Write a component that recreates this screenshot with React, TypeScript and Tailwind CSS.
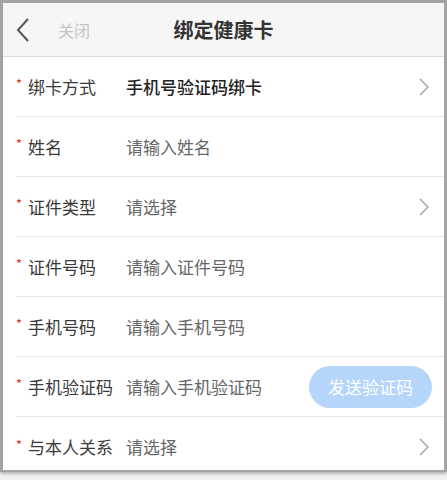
const font = { fontFamily: '"Noto Sans CJK SC", "Noto Sans", sans-serif' };

function Chevron() {
  return (
    <svg width="12" height="20" viewBox="0 0 12 20" className="mr-[14px] shrink-0">
      <path d="M2 2 L10 10 L2 18" fill="none" stroke="#a8a8a8" strokeWidth="1.6" />
    </svg>
  );
}

type RowProps = {
  label: string;
  value: string;
  strong?: boolean;
  arrow?: boolean;
  button?: boolean;
};

function Row({ label, value, strong, arrow, button }: RowProps) {
  return (
    <div className="ml-[13px] flex h-[60px] shrink-0 items-center border-b border-[#e6e6e6] last:border-b-0">
      <span className="mb-[6px] w-[12px] text-[13px] leading-none text-[#f0302a]">*</span>
      <span className="w-[98px] text-[17px] text-[#3a3a3a]">{label}</span>
      <span className={strong ? "flex-1 text-[17px] font-medium text-[#222]" : "flex-1 text-[17px] text-[#666]"}>
        {value}
      </span>
      {arrow && <Chevron />}
      {button && (
        <button className="mr-[12px] flex h-[42px] w-[123px] items-center justify-center rounded-full bg-[#b5d5fb] text-[17px] text-white">
          发送验证码
        </button>
      )}
    </div>
  );
}

export default function App() {
  return (
    <div className="h-[480px] w-[447px] bg-[#f2f2f2]" style={font}>
      <div className="flex h-[472px] flex-col overflow-hidden border-[3px] border-b-[2px] border-[#a3a3a3] bg-white shadow-[0_2px_3px_rgba(0,0,0,0.25)]">
        <div className="relative flex h-[54px] shrink-0 items-center border-b border-[#dcdcdc] bg-[#f6f6f6]">
          <svg width="16" height="26" viewBox="0 0 16 26" className="ml-[12px]">
            <path d="M13 2 L3 13 L13 24" fill="none" stroke="#555" strokeWidth="2" />
          </svg>
          <span className="ml-[27px] text-[16px] text-[#c4c4c4]">关闭</span>
          <span className="pointer-events-none absolute left-0 right-0 text-center text-[20px] font-bold text-[#333]">
            绑定健康卡
          </span>
        </div>
        <Row label="绑卡方式" value="手机号验证码绑卡" strong arrow />
        <Row label="姓名" value="请输入姓名" />
        <Row label="证件类型" value="请选择" arrow />
        <Row label="证件号码" value="请输入证件号码" />
        <Row label="手机号码" value="请输入手机号码" />
        <Row label="手机验证码" value="请输入手机验证码" button />
        <Row label="与本人关系" value="请选择" arrow />
      </div>
    </div>
  );
}
